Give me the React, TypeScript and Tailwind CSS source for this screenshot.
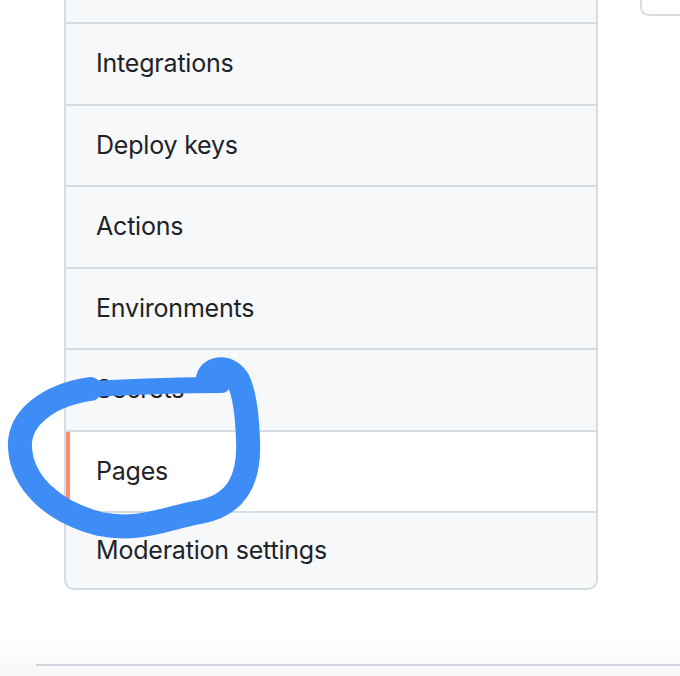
import React from "react";

const items = [
  "Integrations",
  "Deploy keys",
  "Actions",
  "Environments",
  "Secrets",
  "Pages",
  "Moderation settings",
];

export default function App() {
  return (
    <div
      className="relative w-[680px] h-[676px] overflow-hidden bg-white"
      style={{ fontFamily: "Inter, 'Noto Sans', sans-serif" }}
    >
      <div className="flex h-[640px]">
        <div className="pl-[64px] w-[598px] shrink-0">
          <div className="border-x-2 border-b-2 border-[#d5dce3] rounded-b-[10px] bg-[#f6f8fa] overflow-hidden">
            <div className="h-[22px]" />
            {items.map((label) => {
              const active = label === "Pages";
              const last = label === "Moderation settings";
              return (
                <div
                  key={label}
                  className={`relative flex items-center border-t-2 border-[#d5dce3] pl-[30px] text-[25px] text-[#1f2328] tracking-[-0.2px] ${
                    active ? "bg-white" : ""
                  } ${last ? "h-[77px]" : "h-[81.5px]"}`}
                >
                  {active && (
                    <div className="absolute left-0 top-0 bottom-0 w-[4px] bg-[#fd8c73]" />
                  )}
                  {label}
                </div>
              );
            })}
          </div>
        </div>
        <div className="flex-1 pl-[42px]">
          <div className="h-[16px] border-l-2 border-b-2 border-[#d8dee4] rounded-bl-[9px] bg-white" />
        </div>
      </div>
      <div className="h-[26px] bg-gradient-to-b from-white to-[#f8f8f8] pl-[36px] flex items-end">
        <div className="w-full h-[2px] bg-[#d0d7de]" />
      </div>
      <div className="h-[10px] bg-[#f8f8f8]" />

      <svg
        className="absolute left-0 top-0 pointer-events-none"
        width="680"
        height="676"
        viewBox="0 0 680 676"
      >
        <g fill="none" stroke="#3e8cf6" strokeLinecap="round" strokeLinejoin="round">
          <path d="M 222 385 C 180 385, 130 387, 90 389" strokeWidth="16" />
          <path
            d="M 90 389 C 50 395, 18 417, 20 448 C 22 482, 52 512, 100 524 C 140 532, 165 518, 200 512 C 236 505, 250 480, 248 440 C 247 410, 244 392, 238 380 C 230 366, 212 366, 208 378"
            strokeWidth="24"
          />
        </g>
      </svg>
    </div>
  );
}
